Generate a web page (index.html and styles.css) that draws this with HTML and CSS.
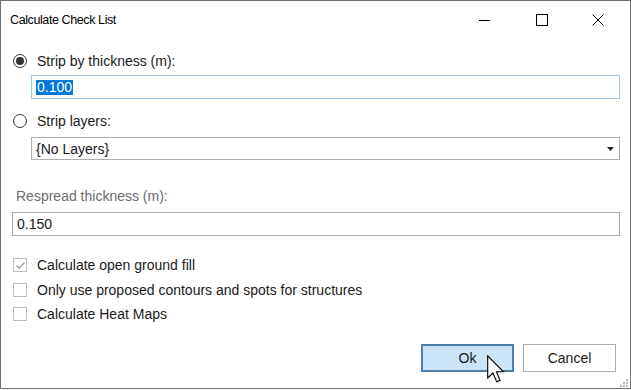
FILE: index.html
```html
<!DOCTYPE html>
<html lang="en">
<head>
  <meta charset="UTF-8">
  <title>Calculate Check List</title>
  <link rel="stylesheet" href="styles.css">
</head>
<body>

<div class="window">

  <!-- Title bar -->
  <div class="titlebar">
    <span class="title">Calculate Check List</span>
    <div class="controls">
      <span class="ctl">
        <svg width="12" height="12" viewBox="0 0 12 12"><path d="M0 6.5H11" stroke="#000" stroke-width="1"/></svg>
      </span>
      <span class="ctl">
        <svg width="12" height="12" viewBox="0 0 12 12"><rect x="0.5" y="0.5" width="11" height="11" fill="none" stroke="#000" stroke-width="1"/></svg>
      </span>
      <span class="ctl">
        <svg width="12" height="12" viewBox="0 0 12 12"><path d="M0.5 0.5L11.5 11.5M11.5 0.5L0.5 11.5" stroke="#000" stroke-width="1"/></svg>
      </span>
    </div>
  </div>

  <!-- Content -->
  <div class="content">

    <div class="option first">
      <span class="radio checked"></span>
      <span class="label">Strip by thickness (m):</span>
    </div>
    <div class="field indent focused">
      <span class="selected">0.100</span>
    </div>

    <div class="option second">
      <span class="radio"></span>
      <span class="label">Strip layers:</span>
    </div>
    <div class="combo indent">
      <span>{No Layers}</span>
      <svg class="arrow" width="7" height="4" viewBox="0 0 7 4"><path d="M0 0H7L3.5 4Z" fill="#222"/></svg>
    </div>

    <div class="caption">Respread thickness (m):</div>
    <div class="field">0.150</div>

    <div class="checks">
      <div class="check-row">
        <span class="box">
          <svg width="11" height="11" viewBox="0 0 11 11"><path d="M1.5 5.5L4.2 8.2L9.5 2.5" fill="none" stroke="#9a9a9a" stroke-width="1.2"/></svg>
        </span>
        <span class="label">Calculate open ground fill</span>
      </div>
      <div class="check-row">
        <span class="box"></span>
        <span class="label">Only use proposed contours and spots for structures</span>
      </div>
      <div class="check-row">
        <span class="box"></span>
        <span class="label">Calculate Heat Maps</span>
      </div>
    </div>

    <div class="buttons">
      <button class="btn default">Ok</button>
      <button class="btn">Cancel</button>
    </div>
  </div>

  <!-- Size grip -->
  <svg class="grip" width="8" height="8" viewBox="0 0 8 8">
    <rect x="6" y="0" width="2" height="2" fill="#bcbcbc"/>
    <rect x="3" y="3" width="2" height="2" fill="#bcbcbc"/>
    <rect x="6" y="3" width="2" height="2" fill="#bcbcbc"/>
    <rect x="0" y="6" width="2" height="2" fill="#bcbcbc"/>
    <rect x="3" y="6" width="2" height="2" fill="#bcbcbc"/>
    <rect x="6" y="6" width="2" height="2" fill="#bcbcbc"/>
  </svg>

  <!-- Mouse pointer -->
  <svg class="pointer" width="18" height="28" viewBox="0 0 13 20">
    <path d="M0.5 0.5V16.5L4.3 12.9L7 19.2L9.4 18.2L6.8 12H11.9Z" fill="#fff" stroke="#000" stroke-width="0.8" stroke-linejoin="miter"/>
  </svg>
</div>

</body>
</html>
```

FILE: styles.css
```css
/* General */
* {
  box-sizing: border-box;
}
body {
  margin: 0;
  background: #fff;
  font-family: "Liberation Sans", Arial, sans-serif;
  font-size: 14px;
  color: #1a1a1a;
}

/* Window frame */
.window {
  position: relative;
  width: 631px;
  height: 389px;
  border: 1px solid #707070;
  background: #fff;
}

/* Title bar */
.titlebar {
  display: flex;
  align-items: center;
  height: 37px;
  padding-left: 9px;
  padding-right: 4px;
}
.title {
  font-size: 12.5px;
  letter-spacing: -0.4px;
  color: #000;
  flex: 1;
}
.controls {
  display: flex;
  height: 100%;
}
.ctl {
  width: 57px;
  display: flex;
  align-items: center;
  justify-content: center;
}
.controls .ctl:last-child {
  width: 56px;
}

/* Content */
.content {
  padding: 0 10px 0 11px;
}

.option {
  display: flex;
  align-items: center;
  height: 16px;
}
.option.first {
  margin-top: 15px;
}
.option.second {
  margin-top: 14px;
}
.label {
  margin-left: 10px;
}

.radio {
  width: 14px;
  height: 14px;
  border: 1px solid #333;
  border-radius: 50%;
  display: flex;
  align-items: center;
  justify-content: center;
  margin-left: 1px;
}
.radio.checked::after {
  content: "";
  width: 8px;
  height: 8px;
  border-radius: 50%;
  background: #333;
}

/* Text fields */
.indent {
  margin-left: 19px;
}
.field {
  height: 24px;
  border: 1px solid #a9a9a9;
  display: flex;
  align-items: center;
  padding-left: 4px;
  margin-top: 8px;
}
.field.focused {
  border-color: #9cc8ee;
  margin-top: 6px;
}
.selected {
  background: #0078d7;
  color: #fff;
  line-height: 15px;
  padding: 0 1px;
}

.combo {
  height: 23px;
  border: 1px solid #adadad;
  display: flex;
  align-items: center;
  justify-content: space-between;
  padding: 0 5px 0 4px;
  margin-top: 8px;
}
.arrow {
  display: block;
}

.caption {
  color: #6d6d6d;
  margin-top: 28px;
  margin-left: 4px;
  height: 16px;
  line-height: 16px;
}

/* Checkboxes */
.checks {
  margin-top: 17px;
}
.check-row {
  display: flex;
  align-items: center;
  height: 24.5px;
}
.box {
  width: 14px;
  height: 14px;
  border: 1px solid #bdbdbd;
  margin-left: 1px;
  display: flex;
  align-items: center;
  justify-content: center;
}

/* Buttons */
.buttons {
  display: flex;
  justify-content: flex-end;
  gap: 9px;
  margin-top: 17px;
  padding-right: 4px;
}
.btn {
  width: 93px;
  height: 28px;
  font-family: "Liberation Sans", Arial, sans-serif;
  font-size: 14px;
  color: #1a1a1a;
  background: #fff;
  border: 1px solid #adadad;
  padding: 0;
}
.btn.default {
  background: #cce4f7;
  border: 2px solid #4d7ea8;
}

.grip {
  position: absolute;
  right: 2px;
  bottom: 1px;
}

.pointer {
  position: absolute;
  left: 486px;
  top: 354px;
}
```
